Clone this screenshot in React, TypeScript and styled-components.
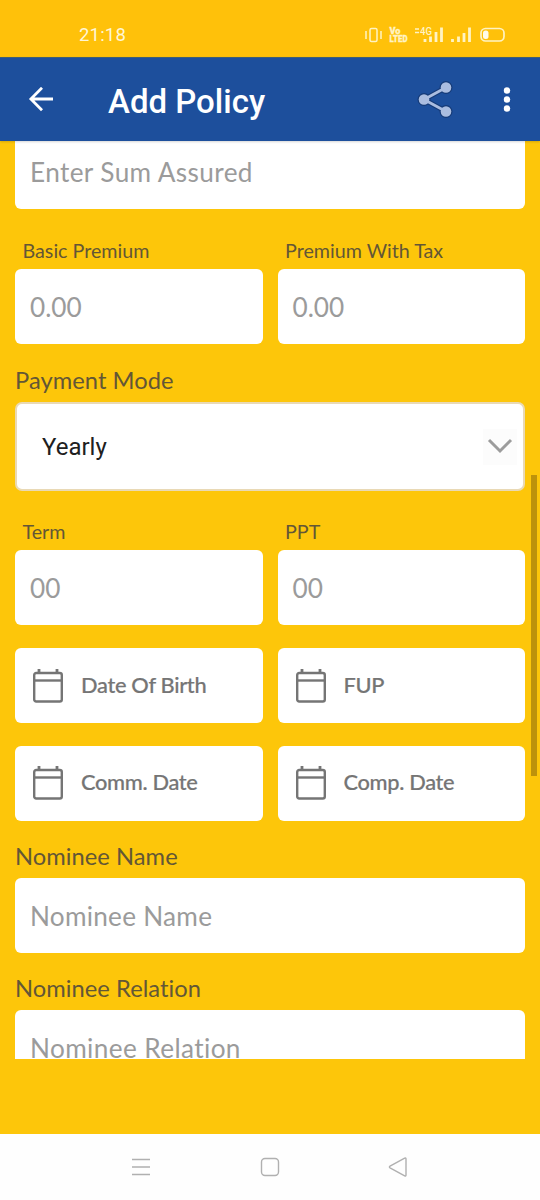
import React from "react";
import styled, { createGlobalStyle } from "styled-components";

const GlobalStyle = createGlobalStyle`
  * { box-sizing: border-box; }
  body { margin: 0; background: #ffffff; }
`;

const Screen = styled.div`
  width: 540px;
  height: 1200px;
  display: flex;
  flex-direction: column;
  overflow: hidden;
  background: #fdc60a;
  font-family: Lato, sans-serif;
  font-variant-ligatures: none;
`;

const StatusBar = styled.div`
  height: 57px;
  flex: none;
  display: flex;
  align-items: center;
  justify-content: space-between;
  padding: 12px 34px 0 79px;
  background: #ffc10a;
  color: #fff6d6;
  font: 400 18.5px/22px Roboto, sans-serif;
  letter-spacing: 0.2px;
`;

const StatusIcons = styled.div`
  display: flex;
  align-items: center;
`;

const AppBar = styled.header`
  position: relative;
  z-index: 1;
  height: 84px;
  flex: none;
  display: flex;
  align-items: center;
  padding: 0 25px 0 28px;
  background: #1d4f9c;
  border-top: 1px solid #3f5f74;
  box-shadow: 0 1px 2px rgba(0, 0, 0, 0.16);
`;

const Title = styled.h1`
  flex: 1;
  margin: 4px 0 0 54px;
  color: #ffffff;
  font: 500 33px/40px Roboto, sans-serif;
`;

const IconButton = styled.button<{ $gap?: number }>`
  display: flex;
  margin: 0 0 0 ${(p) => p.$gap ?? 0}px;
  padding: 0;
  border: 0;
  background: none;
`;

const Body = styled.div`
  display: flex;
  height: 918px;
  flex: none;
  overflow: hidden;
`;

const Form = styled.main`
  width: 525px;
  flex: none;
  padding-left: 15px;
`;

const ScrollTrack = styled.div`
  width: 15px;
  padding: 334px 3px 0 6px;
`;

const ScrollThumb = styled.div`
  height: 301px;
  background: #bd920b;
`;

const Columns = styled.div<{ $top: number }>`
  display: grid;
  grid-template-columns: 1fr 1fr;
  column-gap: 15px;
  margin-top: ${(p) => p.$top}px;
`;

const SmallLabel = styled.label`
  display: block;
  height: 30px;
  padding-left: 7.5px;
  color: #635636;
  font-size: 19.7px;
  line-height: 24px;
`;

const Label = styled.label<{ $top: number; $bottom: number }>`
  display: block;
  margin: ${(p) => p.$top}px 0 ${(p) => p.$bottom}px;
  color: #635636;
  font-size: 23.7px;
  line-height: 28px;
  letter-spacing: 0.05px;
`;

const Field = styled.div<{ $height?: number; $flatTop?: boolean; $tracking?: number }>`
  height: ${(p) => p.$height ?? 75}px;
  display: flex;
  align-items: flex-end;
  padding: 0 15px 21px;
  border-radius: ${(p) => (p.$flatTop ? "0 0 6px 6px" : "6px")};
  background: #ffffff;
  color: #9b9b9b;
  font-size: 26.2px;
  line-height: 32px;
  letter-spacing: ${(p) => p.$tracking ?? 0}px;
`;

const Select = styled.div`
  height: 89px;
  display: flex;
  align-items: center;
  justify-content: space-between;
  padding: 0 6px 0 25px;
  border: 2px solid #e9d9b5;
  border-radius: 7px;
  background: #ffffff;
  color: #202020;
  font: 400 24px/30px Roboto, sans-serif;
`;

const SelectArrow = styled.span`
  width: 34px;
  height: 36px;
  display: grid;
  place-items: center;
  padding-bottom: 2px;
  background: #fcfcfc;
`;

const DateField = styled.button`
  height: 75px;
  display: flex;
  align-items: center;
  gap: 18px;
  padding: 0 18px;
  border: 0;
  border-radius: 6px;
  background: #ffffff;
  color: #757575;
  font: 500 21.8px/28px Lato, sans-serif;
  letter-spacing: -0.32px;
  -webkit-text-stroke: 0.2px #757575;
`;

const DateText = styled.span`
  margin-bottom: 2px;
`;

const NavBar = styled.nav`
  height: 66px;
  flex: none;
  margin-top: auto;
  display: flex;
  align-items: center;
  justify-content: center;
  gap: 108px;
  background: #fefefe;
`;

const CalendarIcon = () => (
  <svg width="30" height="36" viewBox="0 0 30 36" fill="none" stroke="#757575">
    <rect x="1.200" y="5" width="27.600" height="28.500" rx="2" strokeWidth="2.400" />
    <path d="M1 12.500H29" strokeWidth="2.400" />
    <path d="M6 1V5M24 1V5" strokeWidth="2.800" />
  </svg>
);

const StatusGlyphs = () => (
  <svg width="142" height="22" viewBox="0 0 142 22" fill="none" stroke="#fff3c4">
    <rect x="6" y="4.5" width="7" height="13" rx="1.5" strokeWidth="1.5" />
    <path d="M2 7V15M17 7V15" strokeWidth="1.500" />
    <g fill="#fff3c4" stroke="none" fontFamily="Roboto, sans-serif" fontWeight="900" letterSpacing="0">
      <text x="25.500" y="10" fontSize="9" textLength="11" lengthAdjust="spacingAndGlyphs" stroke="#fff3c4" strokeWidth=".3">Vo</text>
      <text x="25.500" y="18" fontSize="9.500" textLength="18" lengthAdjust="spacingAndGlyphs" stroke="#fff3c4" strokeWidth=".3">LTED</text>
      <text x="56" y="10.800" fontSize="10.500" fontWeight="500" textLength="12" lengthAdjust="spacingAndGlyphs">4G</text>
    </g>
    <path d="M51 5H55M51 8.500H55" strokeWidth="1.600" />
    <path d="M61 18V15M66.500 18V12.500M72 18V8M77.500 18V3.500" strokeWidth="2.800" />
    <path d="M88.500 18V15M94.500 18V12.500M100 18V9M105.500 18V3.500" strokeWidth="2.800" />
    <rect x="117" y="4.500" width="23" height="12.500" rx="4.500" strokeWidth="1.700" />
    <rect x="119" y="6.500" width="5.500" height="8.500" rx="2.500" fill="#fffbe8" stroke="none" />
  </svg>
);

const BackArrow = () => (
  <svg width="26" height="26" viewBox="0 0 26 26" fill="none" stroke="#fff" strokeWidth="2.8">
    <path d="M25 12H3M14 .8L2.900 12L14 23.200" />
  </svg>
);

const ShareIcon = () => (
  <svg width="38" height="40" viewBox="0 0 38 40">
    <g fill="#163b78" stroke="#163b78">
      <path d="M7 19.500L29 7.500M7 19.500L29 31.500" strokeWidth="5" />
      <circle cx="7" cy="19.500" r="6.500" stroke="none" />
      <circle cx="29" cy="7.500" r="6.500" stroke="none" />
      <circle cx="29" cy="31.500" r="6.500" stroke="none" />
    </g>
    <g fill="#aabde0" stroke="#aabde0">
      <path d="M7 19.500L29 7.500M7 19.500L29 31.500" strokeWidth="2.800" />
      <circle cx="7" cy="19.500" r="5.300" stroke="none" />
      <circle cx="29" cy="7.500" r="5.300" stroke="none" />
      <circle cx="29" cy="31.500" r="5.300" stroke="none" />
    </g>
  </svg>
);

const MoreIcon = () => (
  <svg width="16" height="28" viewBox="0 0 16 28" fill="#fff">
    <circle cx="8" cy="4.500" r="3.200" />
    <circle cx="8" cy="13.500" r="3.200" />
    <circle cx="8" cy="22.500" r="3.200" />
  </svg>
);

const DateInput = ({ children }: { children: React.ReactNode }) => (
  <DateField>
    <CalendarIcon />
    <DateText>{children}</DateText>
  </DateField>
);

const NumberInput = ({ label, value }: { label: string; value: string }) => (
  <div>
    <SmallLabel>{label}</SmallLabel>
    <Field>{value}</Field>
  </div>
);

export default function App() {
  return (
    <Screen>
      <GlobalStyle />
      <StatusBar>
        <span>21:18</span>
        <StatusIcons>
          <StatusGlyphs />
        </StatusIcons>
      </StatusBar>
      <AppBar>
        <IconButton aria-label="Back">
          <BackArrow />
        </IconButton>
        <Title>Add Policy</Title>
        <IconButton aria-label="Share">
          <ShareIcon />
        </IconButton>
        <IconButton aria-label="More" $gap={44}>
          <MoreIcon />
        </IconButton>
      </AppBar>
      <Body>
        <Form>
          <Field $height={68} $flatTop $tracking={0.38}>
            Enter Sum Assured
          </Field>
          <Columns $top={30}>
            <NumberInput label="Basic Premium" value="0.00" />
            <NumberInput label="Premium With Tax" value="0.00" />
          </Columns>
          <Label $top={22} $bottom={8}>
            Payment Mode
          </Label>
          <Select>
            Yearly
            <SelectArrow>
              <svg width="26" height="16" viewBox="0 0 26 16" fill="none" stroke="#9c9c9c" strokeWidth="3">
                <path d="M2 2L13 13L24 2" />
              </svg>
            </SelectArrow>
          </Select>
          <Columns $top={29}>
            <NumberInput label="Term" value="00" />
            <NumberInput label="PPT" value="00" />
          </Columns>
          <Columns $top={23}>
            <DateInput>Date Of Birth</DateInput>
            <DateInput>FUP</DateInput>
          </Columns>
          <Columns $top={22.5}>
            <DateInput>Comm. Date</DateInput>
            <DateInput>Comp. Date</DateInput>
          </Columns>
          <Label $top={21.5} $bottom={8}>
            Nominee Name
          </Label>
          <Field $tracking={0.25}>Nominee Name</Field>
          <Label $top={21} $bottom={7.5}>
            Nominee Relation
          </Label>
          <Field $tracking={0.38}>Nominee Relation</Field>
        </Form>
        <ScrollTrack>
          <ScrollThumb />
        </ScrollTrack>
      </Body>
      <NavBar>
        <svg width="20" height="20" viewBox="0 0 20 20" stroke="#b0b0b0" strokeWidth="1.300">
          <path d="M0 2.500H18M0 10H18M0 17.500H18" />
        </svg>
        <svg width="20" height="20" viewBox="0 0 20 20" fill="none" stroke="#b0b0b0" strokeWidth="1.400">
          <rect x="1.500" y="1.500" width="17" height="17" rx="3.500" />
        </svg>
        <svg width="20" height="22" viewBox="0 0 20 22" fill="none" stroke="#b0b0b0" strokeWidth="1.400" strokeLinejoin="round">
          <path d="M18 3Q18 1.500 16.700 2.200L2 10.200Q.8 11 2 11.800L16.700 19.800Q18 20.500 18 19Z" />
        </svg>
      </NavBar>
    </Screen>
  );
}
